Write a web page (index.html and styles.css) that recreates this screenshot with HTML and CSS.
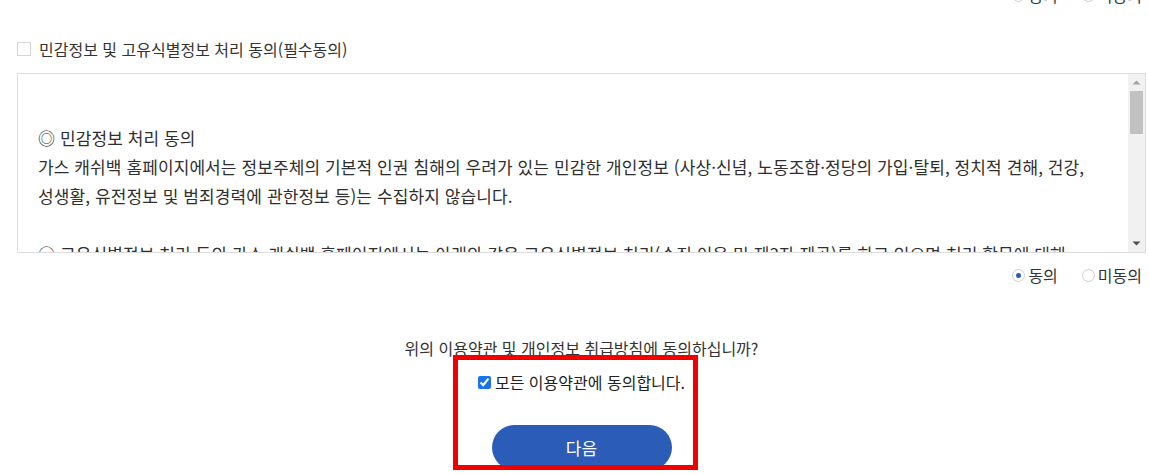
FILE: index.html
```html
<!DOCTYPE html>
<html lang="ko">
<head>
<meta charset="utf-8">
<title>약관 동의</title>
<link rel="stylesheet" href="styles.css">
</head>
<body>
<main class="page">
  <div class="radio-row">
    <label class="radio"><span class="radio-dot"></span><span>동의</span></label>
    <label class="radio"><span class="radio-dot"></span><span>미동의</span></label>
  </div>

  <section class="terms">
    <div class="terms-title">
      <span class="box"></span>
      <span>민감정보 및 고유식별정보 처리 동의(필수동의)</span>
    </div>
    <div class="terms-frame">
      <div class="terms-body">
        <p>◎ 민감정보 처리 동의</p>
        <p>가스 캐쉬백 홈페이지에서는 정보주체의 기본적 인권 침해의 우려가 있는 민감한 개인정보 (사상·신념, 노동조합·정당의 가입·탈퇴, 정치적 견해, 건강, 성생활, 유전정보 및 범죄경력에 관한정보 등)는 수집하지 않습니다.</p>
        <p class="blank"></p>
        <p>○ 고유식별정보 처리 동의 가스 캐쉬백 홈페이지에서는 아래와 같은 고유식별정보 처리(수집·이용 및 제3자 제공)를 하고 있으며 처리 항목에 대해 제공합니다.</p>
        <p>- 처리 목적 : 본인확인 및 가스요금 캐쉬백 지급</p>
        <p>- 처리 항목 : 주민등록번호, 외국인등록번호</p>
      </div>
      <div class="scrollbar" aria-hidden="true">
        <svg class="arrow up" width="17" height="17" viewBox="0 0 17 17"><polygon points="4.5,10.5 12.5,10.5 8.5,6.5" fill="#a3a3a3"/></svg>
        <div class="track"><div class="thumb"></div></div>
        <svg class="arrow" width="17" height="17" viewBox="0 0 17 17"><polygon points="4.5,6.5 12.5,6.5 8.5,10.5" fill="#505050"/></svg>
      </div>
    </div>
    <div class="radio-row">
      <label class="radio"><span class="radio-dot on"></span><span>동의</span></label>
      <label class="radio"><span class="radio-dot"></span><span>미동의</span></label>
    </div>
  </section>

  <section class="agree">
    <p class="question">위의 이용약관 및 개인정보 취급방침에 동의하십니까?</p>
    <div class="agree-box">
      <label class="all-agree"><input type="checkbox" checked><span>모든 이용약관에 동의합니다.</span></label>
      <button class="next" type="button">다음</button>
      <div class="highlight"></div>
    </div>
  </section>
</main>
</body>
</html>
```

FILE: styles.css
```css
* { box-sizing: border-box; }
html, body { margin: 0; padding: 0; background: #fff; overflow: hidden; }
body {
  font-family: "Noto Sans CJK KR", "Noto Sans", sans-serif;
  color: #333;
}
.page {
  margin: -15px 0 0 17px;
  width: 1129px;
}
.radio-row {
  display: flex;
  justify-content: flex-end;
  gap: 24px;
  padding-right: 4px;
  height: 20px;
  line-height: 20px;
  font-size: 16px;
  color: #333;
}
.radio { display: flex; align-items: center; gap: 3px; }
.radio-dot {
  width: 13px; height: 13px;
  border: 1px solid #cfcfcf;
  border-radius: 50%;
  display: flex; align-items: center; justify-content: center;
  background: #fff;
}
.radio-dot.on::after {
  content: "";
  width: 5px; height: 5px;
  border-radius: 50%;
  background: #2a5bb7;
}
.terms { margin-top: 34px; }
.terms-title {
  display: flex; align-items: center; gap: 8px;
  height: 20px; line-height: 20px;
  font-size: 16px; color: #333;
}
.box {
  width: 14px; height: 14px;
  border: 1px solid #d6d6d6;
  background: #fff;
}
.terms-frame {
  margin-top: 14px;
  height: 180px;
  border: 1px solid #dcdcdc;
  display: flex;
}
.terms-body {
  flex: 1;
  overflow: hidden;
  padding: 49px 20px 0 20px;
  font-size: 17px;
  letter-spacing: 0.1px;
  line-height: 29px;
  color: #2f2f2f;
  word-break: keep-all;
}
.terms-body p { margin: 0; }
.terms-body .blank { height: 29px; }
.scrollbar {
  width: 17px;
  background: #f1f1f1;
  display: flex;
  flex-direction: column;
}
.arrow { display: block; flex: none; }
.track { flex: 1; padding: 0 2px; }
.thumb {
  height: 43px;
  background: #c1c1c1;
}
.terms .radio-row { margin-top: 12px; }
.agree { margin-top: 53px; text-align: center; }
.question {
  margin: 0;
  height: 20px; line-height: 20px;
  font-size: 16px; color: #333;
}
.agree-box {
  position: relative;
  margin-top: 14px;
  display: flex; flex-direction: column; align-items: center;
}
.all-agree {
  display: flex; align-items: center; gap: 4px;
  height: 20px; line-height: 20px;
  font-size: 16px; color: #222;
}
.all-agree input {
  margin: 0;
  width: 13px; height: 13px;
  accent-color: #1a73e8;
}
.next {
  margin-top: 33px;
  width: 180px; height: 45px;
  border: 0;
  border-radius: 23px;
  background: #2b5cb8;
  color: #fff;
  font-family: inherit;
  font-size: 17px;
}
.highlight {
  position: absolute;
  left: 436px; top: -17px;
  width: 245px; height: 115px;
  border: 5px solid #f20000;
  pointer-events: none;
}
```
